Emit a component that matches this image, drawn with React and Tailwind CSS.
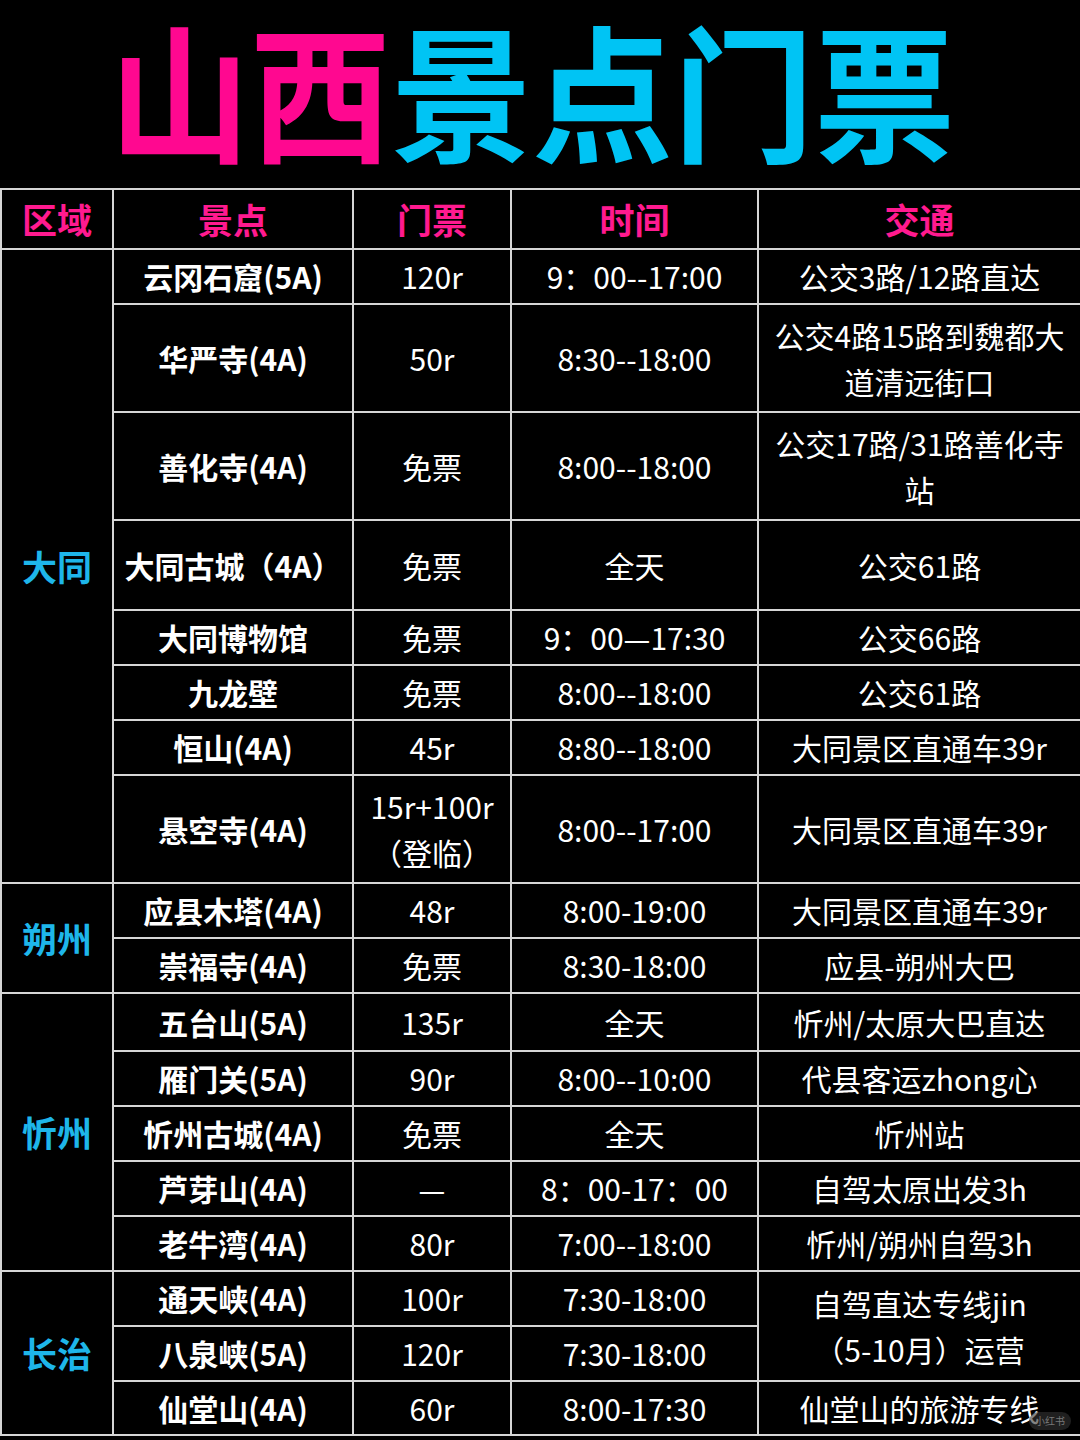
import React from "react";

const groups = [
  {
    region: "大同",
    rows: [
      { name: "云冈石窟(5A)", price: "120r", time: "9：00--17:00", traffic: "公交3路/12路直达", h: "h-[55px]" },
      { name: "华严寺(4A)", price: "50r", time: "8:30--18:00", traffic: ["公交4路15路到魏都大", "道清远街口"], h: "h-[108px]" },
      { name: "善化寺(4A)", price: "免票", time: "8:00--18:00", traffic: ["公交17路/31路善化寺", "站"], h: "h-[108px]" },
      { name: "大同古城（4A）", price: "免票", time: "全天", traffic: "公交61路", h: "h-[90px]" },
      { name: "大同博物馆", price: "免票", time: "9：00—17:30", traffic: "公交66路", h: "h-[55px]" },
      { name: "九龙壁", price: "免票", time: "8:00--18:00", traffic: "公交61路", h: "h-[55px]" },
      { name: "恒山(4A)", price: "45r", time: "8:80--18:00", traffic: "大同景区直通车39r", h: "h-[55px]" },
      { name: "悬空寺(4A)", price: ["15r+100r", "（登临）"], time: "8:00--17:00", traffic: "大同景区直通车39r", h: "h-[108px]" },
    ],
  },
  {
    region: "朔州",
    rows: [
      { name: "应县木塔(4A)", price: "48r", time: "8:00-19:00", traffic: "大同景区直通车39r", h: "h-[55px]" },
      { name: "崇福寺(4A)", price: "免票", time: "8:30-18:00", traffic: "应县-朔州大巴", h: "h-[55px]" },
    ],
  },
  {
    region: "忻州",
    rows: [
      { name: "五台山(5A)", price: "135r", time: "全天", traffic: "忻州/太原大巴直达", h: "h-[58px]" },
      { name: "雁门关(5A)", price: "90r", time: "8:00--10:00", traffic: "代县客运zhong心", h: "h-[55px]" },
      { name: "忻州古城(4A)", price: "免票", time: "全天", traffic: "忻州站", h: "h-[55px]" },
      { name: "芦芽山(4A)", price: "—", time: "8：00-17：00", traffic: "自驾太原出发3h", h: "h-[55px]" },
      { name: "老牛湾(4A)", price: "80r", time: "7:00--18:00", traffic: "忻州/朔州自驾3h", h: "h-[55px]" },
    ],
  },
  {
    region: "长治",
    rows: [
      { name: "通天峡(4A)", price: "100r", time: "7:30-18:00", traffic: ["自驾直达专线jin", "（5-10月）运营"], span: 2, h: "h-[55px]" },
      { name: "八泉峡(5A)", price: "120r", time: "7:30-18:00", traffic: null, h: "h-[55px]" },
      { name: "仙堂山(4A)", price: "60r", time: "8:00-17:30", traffic: "仙堂山的旅游专线", h: "h-[54px]" },
    ],
  },
];

const cell = "border-2 border-[#d6d6d6] text-center align-middle p-0";

function Lines({ value }) {
  if (Array.isArray(value)) {
    return value.map((v, i) => (
      <div key={i} className="leading-[46px]">
        {v}
      </div>
    ));
  }
  return value;
}

export default function App() {
  return (
    <div
      className="relative w-[1080px] h-[1440px] bg-black overflow-hidden"
      style={{ fontFamily: '"Noto Sans CJK SC", "Noto Sans", sans-serif' }}
    >
      {/* title */}
      <div className="h-[188px] flex items-center justify-center pb-[12px] pr-[16px]">
        <h1 className="text-[141px] font-bold leading-[1.1] scale-y-[1.04]">
          <span className="text-[#ff0890]">山西</span>
          <span className="text-[#00c4f4]">景点门票</span>
        </h1>
      </div>

      <table className="w-[1080px] table-fixed border-collapse text-white">
        <colgroup>
          <col className="w-[112px]" />
          <col className="w-[240px]" />
          <col className="w-[158px]" />
          <col className="w-[247px]" />
          <col className="w-[323px]" />
        </colgroup>
        <thead>
          <tr className="h-[60px]">
            {["区域", "景点", "门票", "时间", "交通"].map((t) => (
              <th key={t} className={`${cell} text-[#ff1a8f] text-[35px] font-bold`}>
                {t}
              </th>
            ))}
          </tr>
        </thead>
        <tbody>
          {groups.map((g) =>
            g.rows.map((r, i) => (
              <tr key={r.name} className={r.h}>
                {i === 0 && (
                  <td rowSpan={g.rows.length} className={`${cell} text-[#1eb6ea] text-[35px] font-bold`}>
                    {g.region}
                  </td>
                )}
                <td className={`${cell} text-[30px] font-bold`}>{r.name}</td>
                <td className={`${cell} text-[30px]`}>
                  <Lines value={r.price} />
                </td>
                <td className={`${cell} text-[30px]`}>{r.time}</td>
                {r.traffic !== null && (
                  <td rowSpan={r.span || 1} className={`${cell} text-[30px]`}>
                    <Lines value={r.traffic} />
                  </td>
                )}
              </tr>
            ))
          )}
        </tbody>
      </table>

      {/* watermark */}
      <div className="absolute right-[9px] bottom-[10px] px-[6px] h-[18px] rounded-full bg-[#333333]/60 text-[#777777] text-[10px] leading-[18px]">
        小红书
      </div>
    </div>
  );
}
